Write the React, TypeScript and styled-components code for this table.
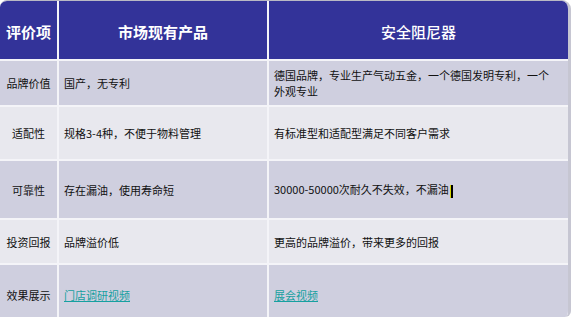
import React from 'react';
import styled, { createGlobalStyle } from 'styled-components';

const GlobalStyle = createGlobalStyle`
  html, body {
    margin: 0;
    padding: 0;
    background: #ffffff;
  }
  body {
    font-family: "Noto Sans CJK SC", "Liberation Sans", sans-serif;
  }
`;

const Frame = styled.div`
  width: 571px;
  height: 317px;
  box-sizing: border-box;
  border-top: 1px solid #b9b9c4;
  border-right: 3px solid #c6c6d2;
  border-radius: 7px 9px 6px 0;
  overflow: hidden;
  background: #ffffff;
`;

const Grid = styled.div`
  display: grid;
  grid-template-columns: 57px 208px 1fr;
  grid-template-rows: 58px 44px 52px 57px 43px 60px;
  column-gap: 2px;
  row-gap: 2px;
  background: #f4f4f8;
`;

const HeadCell = styled.div<{ $light?: boolean }>`
  background: #333399;
  color: #ffffff;
  display: flex;
  align-items: center;
  justify-content: center;
  font-size: 15px;
  font-weight: ${(p) => (p.$light ? 500 : 700)};
  padding-top: 2px;
`;

const Cell = styled.div<{ $alt?: boolean; $center?: boolean }>`
  background: ${(p) => (p.$alt ? '#e8e8ee' : '#cfcfdf')};
  color: #111111;
  display: flex;
  flex-direction: column;
  justify-content: center;
  align-items: ${(p) => (p.$center ? 'center' : 'flex-start')};
  padding: 0 5px;
  font-size: 11px;
  line-height: 16px;
`;

const Line = styled.div`
  white-space: nowrap;
`;

const Link = styled.a`
  color: #16a0a0;
  text-decoration: underline;
  cursor: pointer;
`;

const Caret = styled.span`
  display: inline-block;
  width: 2px;
  height: 13px;
  margin-left: 1px;
  background: #000000;
  border-left: 1px solid #d4d400;
  vertical-align: middle;
`;

type Row = { label: string; market: React.ReactNode; ours: React.ReactNode };

const rows: Row[] = [
  {
    label: '品牌价值',
    market: '国产，无专利',
    ours: (
      <>
        <Line>德国品牌，专业生产气动五金，一个德国发明专利，一个</Line>
        <Line>外观专业</Line>
      </>
    ),
  },
  {
    label: '适配性',
    market: '规格3-4种，不便于物料管理',
    ours: '有标准型和适配型满足不同客户需求',
  },
  {
    label: '可靠性',
    market: '存在漏油，使用寿命短',
    ours: (
      <Line>
        30000-50000次耐久不失效，不漏油
        <Caret />
      </Line>
    ),
  },
  {
    label: '投资回报',
    market: '品牌溢价低',
    ours: '更高的品牌溢价，带来更多的回报',
  },
  {
    label: '效果展示',
    market: <Link>门店调研视频</Link>,
    ours: <Link>展会视频</Link>,
  },
];

const App = () => {
  return (
    <>
      <GlobalStyle />
      <Frame>
        <Grid>
          <HeadCell>评价项</HeadCell>
          <HeadCell>市场现有产品</HeadCell>
          <HeadCell $light>安全阻尼器</HeadCell>
          {rows.map((r, i) => (
            <React.Fragment key={r.label}>
              <Cell $alt={i % 2 === 1} $center>
                {r.label}
              </Cell>
              <Cell $alt={i % 2 === 1}>{r.market}</Cell>
              <Cell $alt={i % 2 === 1}>{r.ours}</Cell>
            </React.Fragment>
          ))}
        </Grid>
      </Frame>
    </>
  );
};

export default App;
